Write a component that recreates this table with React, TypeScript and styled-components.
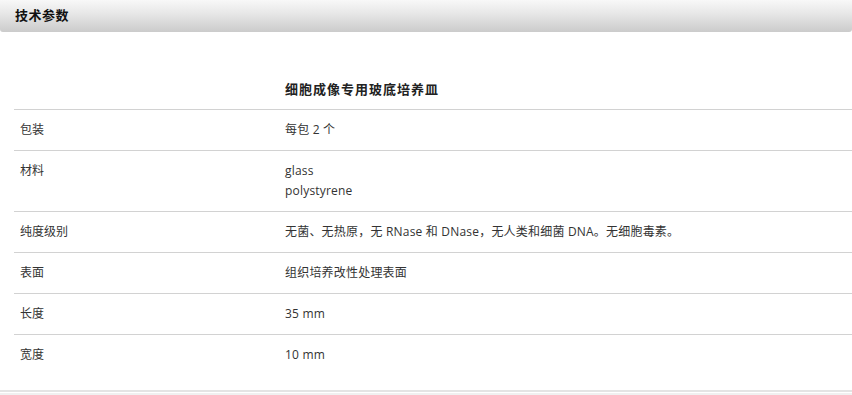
import styled, { createGlobalStyle } from "styled-components";

const GlobalStyle = createGlobalStyle`
  html, body {
    margin: 0;
    padding: 0;
    background: #ffffff;
  }
  body {
    font-family: "Open Sans", "Noto Sans CJK SC", sans-serif;
    color: #333333;
  }
`;

const Panel = styled.section`
  width: 852px;
  height: 395px;
  overflow: hidden;
  display: flex;
  flex-direction: column;
`;

const PanelHeader = styled.div`
  height: 32px;
  flex: none;
  display: flex;
  align-items: center;
  padding-left: 15px;
  background: linear-gradient(to bottom, #f8f8f8 0%, #e6e6e6 45%, #cbcbcb 100%);
  border-bottom-left-radius: 3px;
  border-bottom-right-radius: 3px;
`;

const PanelTitle = styled.h3`
  margin: 0;
  font-family: "Noto Sans CJK SC", sans-serif;
  font-size: 13px;
  font-weight: 700;
  letter-spacing: 0.5px;
  color: #111111;
  line-height: 1;
  margin-top: -4px;
`;

const SpecTable = styled.div`
  margin: 37px 0 0 14px;
  display: grid;
  grid-template-columns: 265px 1fr;
`;

const SpecRow = styled.div<{ $last?: boolean }>`
  display: contents;
  & > div {
    border-bottom: ${(p) => (p.$last ? "none" : "1px solid #d2d2d2")};
  }
`;

const Cell = styled.div`
  padding: 10px 6px;
  font-size: 12px;
  line-height: 20px;
  color: #333333;
  font-family: "Open Sans", "Noto Sans CJK SC", sans-serif;
`;

const HeadCell = styled(Cell)`
  font-family: "Noto Sans CJK SC", sans-serif;
  font-size: 13px;
  font-weight: 700;
  letter-spacing: 1px;
  color: #222222;
`;

const ValueCell = styled(Cell)`
  letter-spacing: 0.2px;
`;

const Line = styled.div`
  display: block;
`;

const PanelFoot = styled.div`
  margin-top: 15px;
  height: 2px;
  background: #e4e4e4;
  box-shadow: 0 3px 0 #f0f0f0;
`;

const specs: { label: string; values: string[] }[] = [
  { label: "包装", values: ["每包 2 个"] },
  { label: "材料", values: ["glass", "polystyrene"] },
  {
    label: "纯度级别",
    values: ["无菌、无热原，无 RNase 和 DNase，无人类和细菌 DNA。无细胞毒素。"],
  },
  { label: "表面", values: ["组织培养改性处理表面"] },
  { label: "长度", values: ["35 mm"] },
  { label: "宽度", values: ["10 mm"] },
];

const App: React.FC = () => {
  return (
    <>
      <GlobalStyle />
      <Panel>
        <PanelHeader>
          <PanelTitle>技术参数</PanelTitle>
        </PanelHeader>
        <SpecTable>
          <SpecRow>
            <Cell />
            <HeadCell>细胞成像专用玻底培养皿</HeadCell>
          </SpecRow>
          {specs.map((s, i) => (
            <SpecRow key={s.label} $last={i === specs.length - 1}>
              <Cell>{s.label}</Cell>
              <ValueCell>
                {s.values.map((v) => (
                  <Line key={v}>{v}</Line>
                ))}
              </ValueCell>
            </SpecRow>
          ))}
        </SpecTable>
        <PanelFoot />
      </Panel>
    </>
  );
};

export default App;
